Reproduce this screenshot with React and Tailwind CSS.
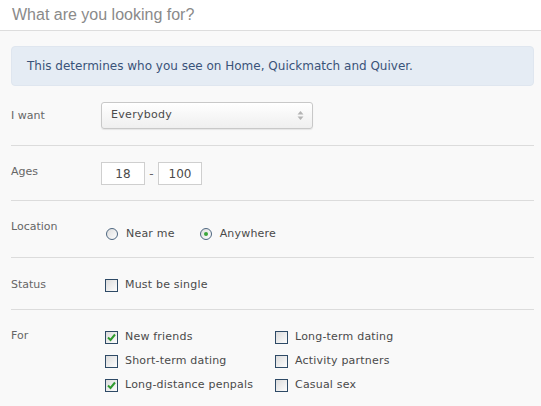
import React, { useState } from "react";

const font = { fontFamily: '"DejaVu Sans", Verdana, sans-serif' };

const Checkbox = ({ checked, label, onChange }) => (
  <label className="flex items-center h-[24px] cursor-pointer" onClick={onChange}>
    <span className="ml-[4px] mr-[7px] w-[13px] h-[13px] border border-[#2e4a66] bg-gradient-to-br from-[#dcdcdc] to-[#fdfdfd] flex items-center justify-center">
      {checked && (
        <svg width="9" height="9" viewBox="0 0 9 9">
          <path d="M1 4.5 L3.5 7 L8 1.5" fill="none" stroke="#2f9a2f" strokeWidth="2" />
        </svg>
      )}
    </span>
    <span className="text-[11px] text-[#4a4a4a] tracking-[0.2px]">{label}</span>
  </label>
);

const Radio = ({ checked, label, onChange }) => (
  <label className="flex items-center cursor-pointer" onClick={onChange}>
    <span className="ml-[5px] mr-[8px] w-[12px] h-[12px] rounded-full border border-[#4d6680] bg-gradient-to-br from-[#dedede] to-[#fdfdfd] flex items-center justify-center">
      {checked && <span className="w-[4px] h-[4px] rounded-full bg-[#3aa53a]" />}
    </span>
    <span className="text-[11px] text-[#4a4a4a] tracking-[0.2px]">{label}</span>
  </label>
);

const Row = ({ label, className, labelClass, children }) => (
  <div className={`flex border-b border-[#dcdcdc] ${className}`}>
    <div className={`w-[90px] shrink-0 text-[11px] text-[#666] leading-[13px] ${labelClass}`}>{label}</div>
    {children}
  </div>
);

export default function App() {
  const [near, setNear] = useState(false);
  const [single, setSingle] = useState(false);
  const [wants, setWants] = useState({
    friends: true,
    short: false,
    penpals: true,
    long: false,
    activity: false,
    casual: false,
  });
  const toggle = (k) => setWants({ ...wants, [k]: !wants[k] });

  return (
    <div className="w-[541px] h-[406px] bg-[#f9f9f9] overflow-hidden" style={font}>
      <div className="h-[31px] bg-white border-b border-[#dddddd] pl-[12px] flex items-center">
        <h1
          className="text-[16px] text-[#8a8a8a] leading-none"
          style={{ fontFamily: '"Liberation Sans", Arial, sans-serif' }}
        >
          What are you looking for?
        </h1>
      </div>

      <div className="pl-[11px] pr-[7px] pt-[15px]">
        <div className="h-[40px] rounded-[4px] bg-[#e5ecf4] border border-[#dfe6ef] pl-[15px] flex items-center text-[12px] text-[#3a5379]">
          This determines who you see on Home, Quickmatch and Quiver.
        </div>

        <Row label="I want" className="h-[60px] items-center pb-[1px]">
          <div className="w-[212px] h-[27px] rounded-[3px] border border-[#c8c8c8] bg-gradient-to-b from-white to-[#efefef] shadow-[0_1px_1px_rgba(0,0,0,0.08)] flex items-center justify-between pl-[9px] pr-[8px]">
            <span className="text-[11px] text-[#4a4a4a] tracking-[0.3px]">Everybody</span>
            <svg width="7" height="11" viewBox="0 0 7 11">
              <path d="M3.5 1 L6.5 4.5 H0.5 Z" fill="#b4b4b4" />
              <path d="M3.5 10 L6.5 6.5 H0.5 Z" fill="#b4b4b4" />
            </svg>
          </div>
        </Row>

        <Row label="Ages" className="h-[55px] items-start pt-[16px]" labelClass="mt-[3px]">
          <div className="flex items-center">
            <div className="w-[44px] h-[23px] border border-[#cfcfcf] bg-white flex items-center justify-center text-[12px] text-[#4a4a4a]">
              18
            </div>
            <span className="w-[13px] text-center text-[12px] text-[#666]">-</span>
            <div className="w-[44px] h-[23px] border border-[#cfcfcf] bg-white flex items-center justify-center text-[12px] text-[#4a4a4a]">
              100
            </div>
          </div>
        </Row>

        <Row label="Location" className="h-[57px] items-start pt-[19px]">
          <div className="flex items-center gap-[20px] mt-[6px]">
            <Radio label="Near me" checked={near} onChange={() => setNear(true)} />
            <Radio label="Anywhere" checked={!near} onChange={() => setNear(false)} />
          </div>
        </Row>

        <Row label="Status" className="h-[52px] items-start pt-[19px]" labelClass="mt-[1px]">
          <div className="-mt-[4px]">
            <Checkbox label="Must be single" checked={single} onChange={() => setSingle(!single)} />
          </div>
        </Row>

        <div className="flex pt-[19px]">
          <div className="w-[90px] shrink-0 text-[11px] text-[#666] leading-[13px]">For</div>
          <div className="grid grid-cols-[170px_170px] -mt-[4px]">
            <Checkbox label="New friends" checked={wants.friends} onChange={() => toggle("friends")} />
            <Checkbox label="Long-term dating" checked={wants.long} onChange={() => toggle("long")} />
            <Checkbox label="Short-term dating" checked={wants.short} onChange={() => toggle("short")} />
            <Checkbox label="Activity partners" checked={wants.activity} onChange={() => toggle("activity")} />
            <Checkbox label="Long-distance penpals" checked={wants.penpals} onChange={() => toggle("penpals")} />
            <Checkbox label="Casual sex" checked={wants.casual} onChange={() => toggle("casual")} />
          </div>
        </div>
      </div>
    </div>
  );
}
